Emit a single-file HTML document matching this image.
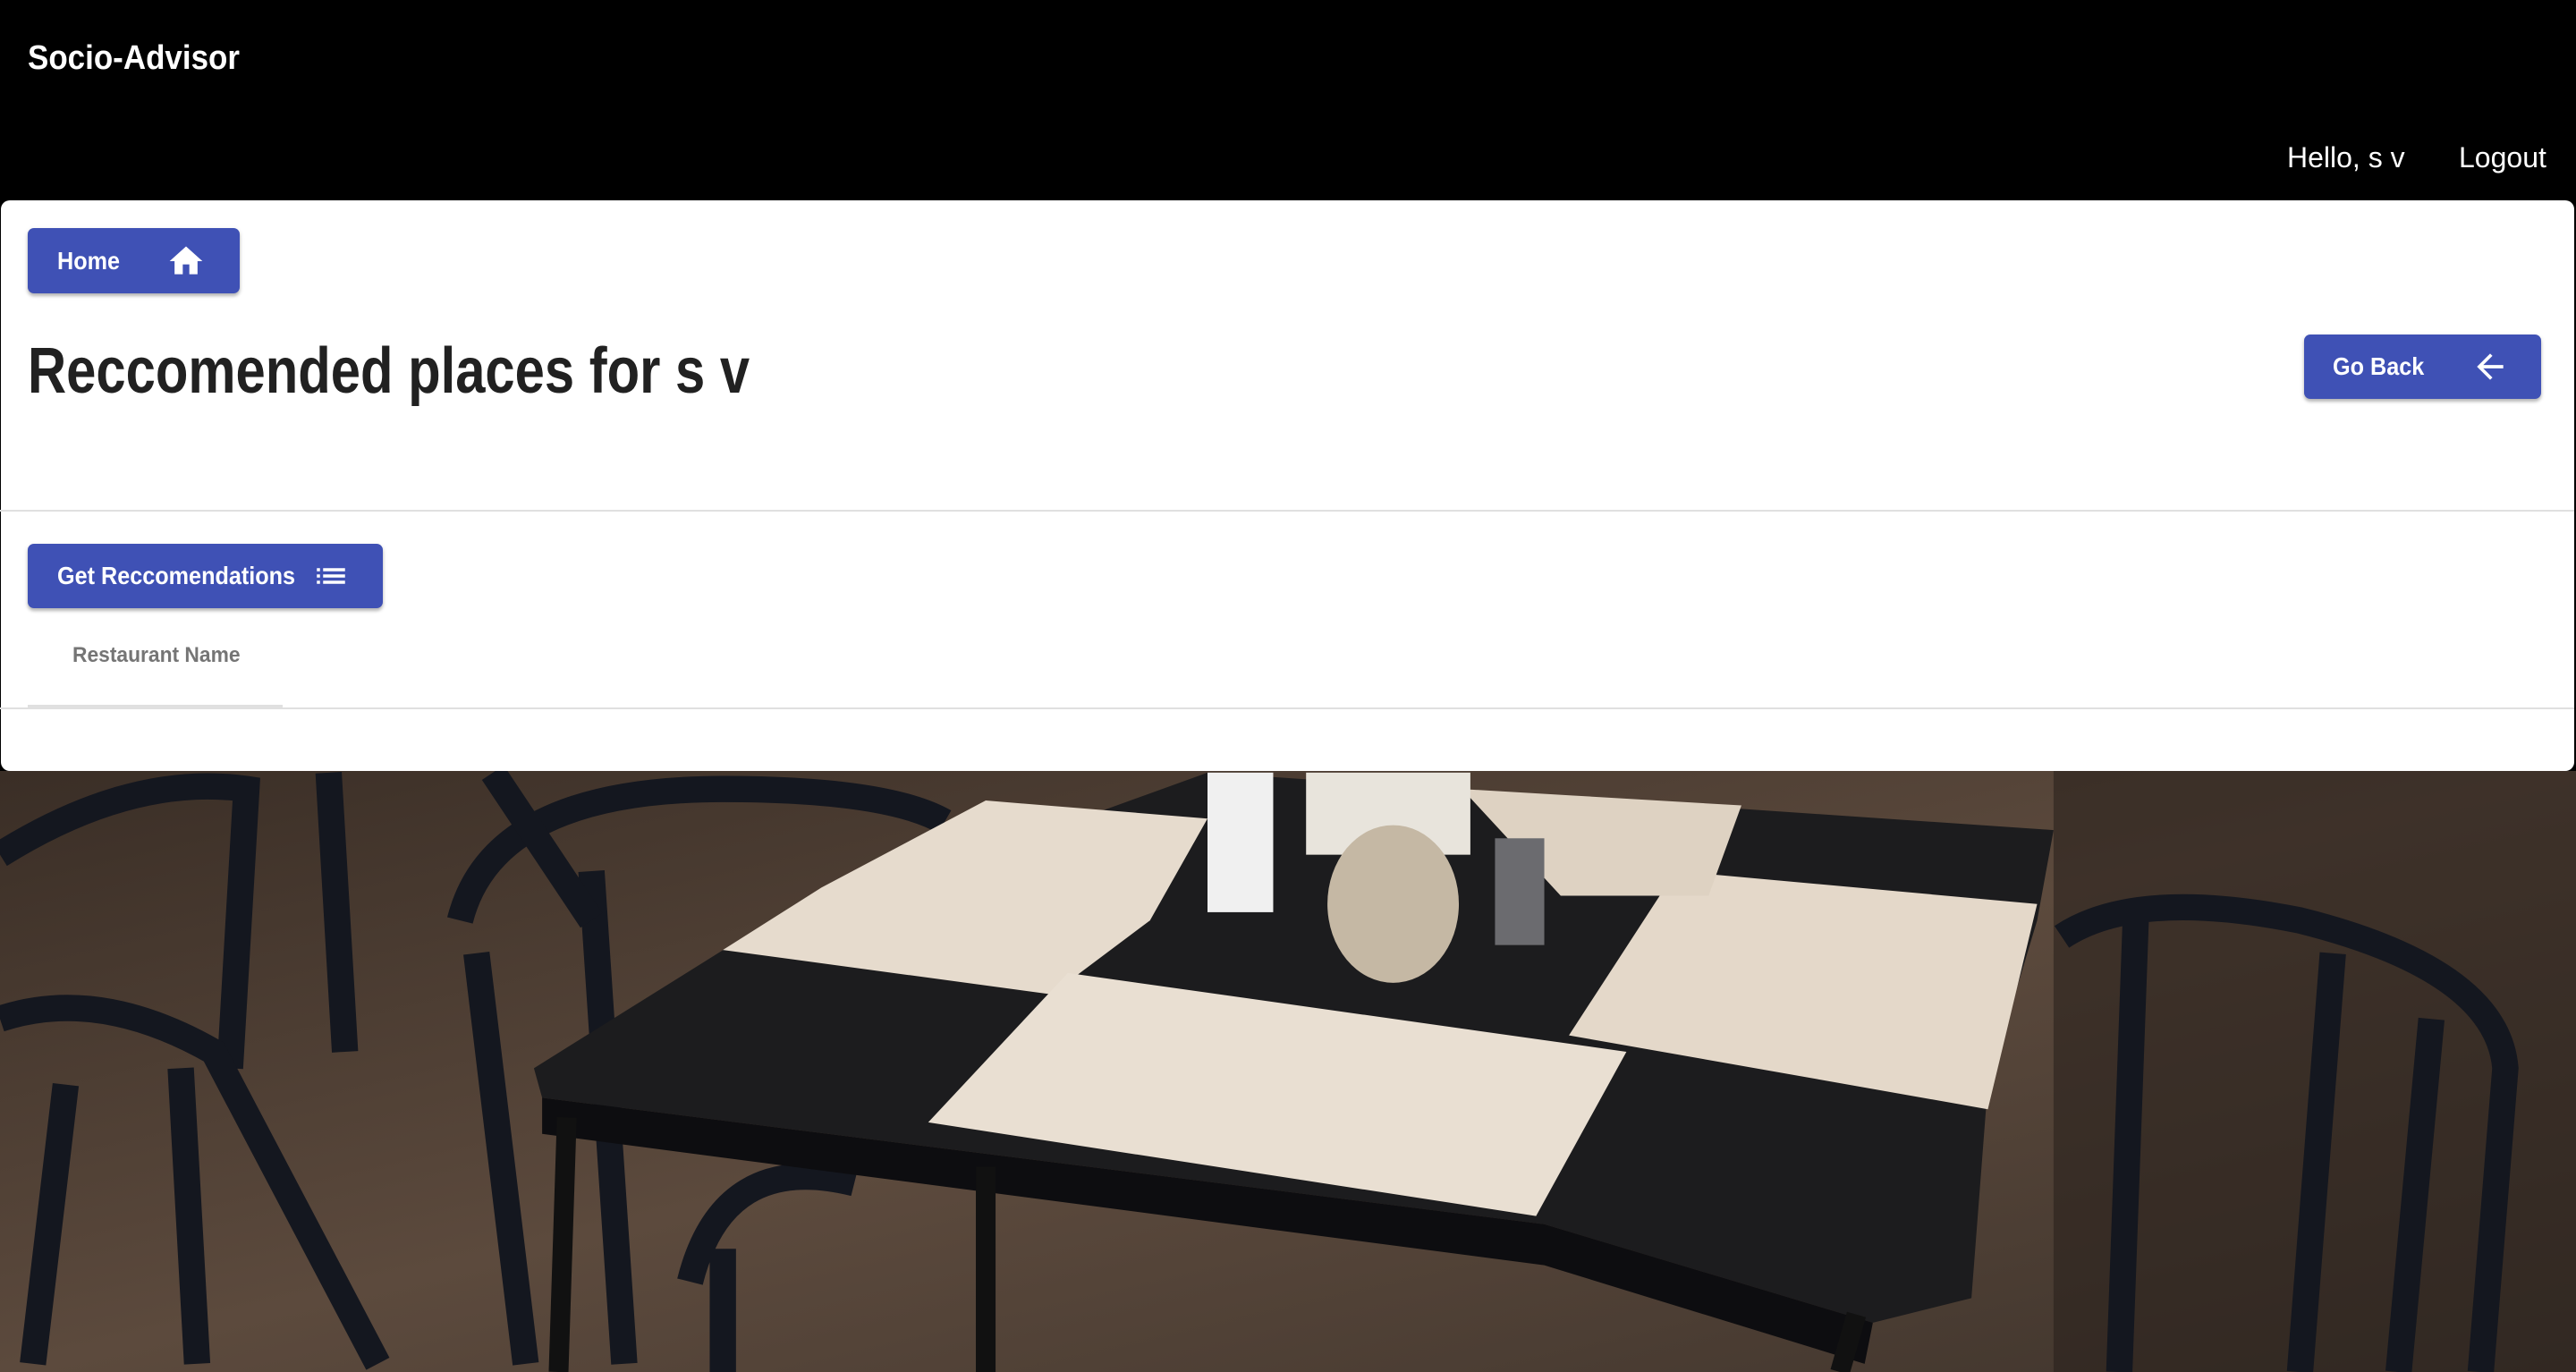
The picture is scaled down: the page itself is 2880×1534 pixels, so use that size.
<!DOCTYPE html>
<html><head><meta charset="utf-8"><style>
*{margin:0;padding:0;box-sizing:border-box}
html,body{width:2880px;height:1534px;overflow:hidden;background:#000;font-family:"Liberation Sans",Arial,sans-serif}
.hdr{position:absolute;left:0;top:0;width:2880px;height:224px;background:#000;color:#fff}
.brand{position:absolute;left:31px;top:44px;font-size:38px;font-weight:bold;transform:scaleX(.92);transform-origin:left}
.nav{position:absolute;top:158px;font-size:32px;color:#fff}
.card{position:absolute;left:1px;top:224px;width:2877px;height:638px;background:#fff;border-radius:10px}
.btn{position:absolute;background:#3f51b5;color:#fff;border-radius:7px;box-shadow:0 3px 3px rgba(0,0,0,.2),0 2px 6px rgba(0,0,0,.14);font-weight:bold;font-size:28px}
.btn span{position:absolute;top:50%;transform:translateY(-50%) scaleX(.9);transform-origin:left;white-space:nowrap}
.btn svg{position:absolute;fill:#fff}
h1{position:absolute;left:30px;top:150px;font-size:72px;font-weight:bold;color:#212121;transform:scaleX(.83);transform-origin:left;white-space:nowrap}
.line{position:absolute;left:0;width:2878px;height:2px;background:#e0e0e0}
.bg{position:absolute;left:0;top:862px;width:2880px;height:672px}
</style></head><body>
<svg class="bg" viewBox="0 469 1568 366" preserveAspectRatio="none">
<defs><linearGradient id="fl" x1="0" y1="0" x2="1" y2="1"><stop offset="0" stop-color="#3a2e26"/><stop offset=".5" stop-color="#5c4a3d"/><stop offset="1" stop-color="#3f342c"/></linearGradient></defs>
<rect x="0" y="469" width="1568" height="366" fill="url(#fl)"/>
<rect x="1250" y="469" width="318" height="366" fill="#2a221d" opacity=".6"/>
<g fill="none" stroke="#14171f" stroke-width="16">
<path d="M0 520 Q80 470 150 480 L140 650 M20 830 L40 660 M120 830 L110 650"/>
<path d="M280 560 Q300 480 440 480 Q540 480 575 500 M290 580 L320 830 M360 530 L380 830 M0 620 Q60 600 130 640 L230 830"/>
<path d="M1255 570 Q1300 540 1400 560 Q1520 590 1525 650 L1510 835 M1300 560 L1290 835 M1420 580 L1400 835 M1480 620 L1460 835"/>
<path d="M420 780 Q440 700 520 720 M440 760 L440 835"/>
<path d="M200 470 L210 640 M300 470 L360 560"/>
</g>
<polygon points="325,650 445,575 735,470 1250,505 1240,560 1210,660 1200,790 1140,805 940,745 330,668" fill="#1c1c1e"/>
<polygon points="330,668 940,745 1140,805 1135,830 940,770 330,690" fill="#0d0d10"/>
<g fill="#111" stroke="#111" stroke-width="12">
<line x1="345" y1="680" x2="340" y2="835"/><line x1="600" y1="710" x2="600" y2="835"/><line x1="1130" y1="800" x2="1120" y2="835"/>
</g>
<polygon points="440,578 500,540 600,487 735,498 700,560 640,605" fill="#e6dbcd"/>
<polygon points="565,683 650,592 990,640 935,740" fill="#e9dfd2"/>
<polygon points="955,630 1020,530 1240,550 1210,675" fill="#e4d8c9"/>
<polygon points="890,480 1060,490 1040,545 950,545" fill="#ded2c2"/>
<rect x="735" y="470" width="40" height="85" fill="#f0f0f0"/>
<rect x="795" y="470" width="100" height="50" fill="#e8e4dc"/>
<ellipse cx="848" cy="550" rx="40" ry="48" fill="#c5b8a4"/>
<rect x="910" y="510" width="30" height="65" fill="#6b6b6f"/>
</svg>
<div class="hdr">
<div class="brand">Socio-Advisor</div>
<div class="nav" style="left:2557px">Hello, s v</div>
<div class="nav" style="left:2749px">Logout</div>
</div>
<div class="card">
<div class="btn" style="left:30px;top:31px;width:237px;height:73px"><span style="left:33px">Home</span>
<svg viewBox="0 0 24 24" style="left:155px;top:15px;width:44px;height:44px"><path d="M10 20v-6h4v6h5v-8h3L12 3 2 12h3v8z"/></svg></div>
<h1>Reccomended places for s v</h1>
<div class="btn" style="left:2575px;top:150px;width:265px;height:72px"><span style="left:32px">Go Back</span>
<svg viewBox="0 0 24 24" style="left:186px;top:14px;width:44px;height:44px"><path d="M20 11H7.83l5.59-5.59L12 4l-8 8 8 8 1.41-1.41L7.83 13H20v-2z"/></svg></div>
</div>
<div class="line" style="top:570px"></div>
<div class="btn" style="left:31px;top:608px;width:397px;height:72px"><span style="left:33px">Get Reccomendations</span>
<svg viewBox="0 0 24 24" style="left:318px;top:15px;width:42px;height:42px"><path d="M3 13h2v-2H3v2zm0 4h2v-2H3v2zm0-8h2V7H3v2zm4 4h14v-2H7v2zm0 4h14v-2H7v2zM7 7v2h14V7H7z"/></svg></div>
<div style="position:absolute;left:81px;top:719px;font-size:24px;font-weight:bold;color:#757575;transform:scaleX(.95);transform-origin:left">Restaurant Name</div>
<div style="position:absolute;left:31px;top:788px;width:285px;height:3px;background:#e0e0e0"></div>
<div class="line" style="top:791px"></div>
</body></html>
